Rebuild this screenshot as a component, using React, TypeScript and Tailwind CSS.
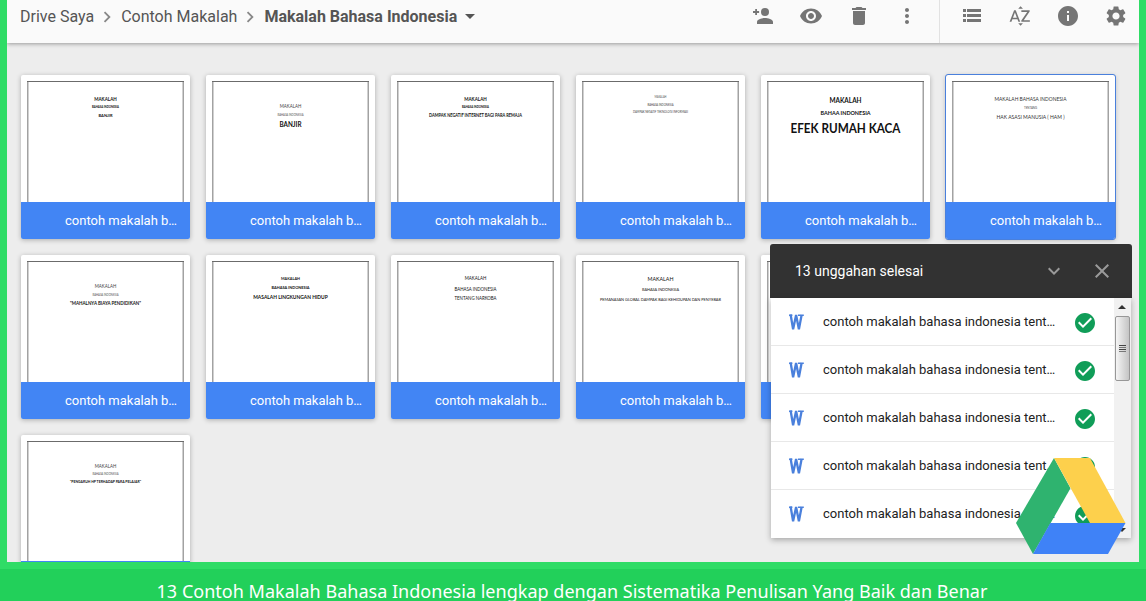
import clsx from "clsx";
import {
  MdCheckCircle,
  MdChevronRight,
  MdClose,
  MdDelete,
  MdExpandMore,
  MdInfo,
  MdMoreVert,
  MdRemoveRedEye,
  MdSettings,
  MdSortByAlpha,
} from "react-icons/md";

type Line = {
  text: string;
  y: number;
  width: number;
  size: number;
  bold?: boolean;
  color?: string;
};

type Doc = {
  lines: Line[];
  selected?: boolean;
  short?: boolean;
};

const docs: Doc[] = [
  {
    lines: [
      { text: "MAKALAH", y: 25.5, width: 22.5, size: 5.2, bold: true },
      { text: "BAHASA INDONESIA", y: 33.2, width: 27, size: 3.2, bold: true },
      { text: "BANJIR", y: 42, width: 14, size: 4.4, bold: true },
    ],
  },
  {
    lines: [
      { text: "MAKALAH", y: 32.8, width: 21.5, size: 5.4, color: "#444" },
      { text: "BAHASA INDONESIA", y: 40.6, width: 26, size: 3.2, color: "#555" },
      { text: "BANJIR", y: 52, width: 22, size: 7.2, bold: true },
    ],
  },
  {
    lines: [
      { text: "MAKALAH", y: 25.5, width: 22.5, size: 5.2, bold: true },
      { text: "BAHASA INDONESIA", y: 33.2, width: 27, size: 3.2, bold: true },
      { text: "DAMPAK NEGATIF INTERNET BAGI PARA REMAJA", y: 42, width: 93, size: 4.6, bold: true },
    ],
  },
  {
    lines: [
      { text: "MAKALAH", y: 23.4, width: 12, size: 3, color: "#555" },
      { text: "BAHASA INDONESIA", y: 30.7, width: 26, size: 3.6, color: "#444" },
      { text: "DAMPAK NEGATIF TEKNOLOGI INFORMASI", y: 37.8, width: 55, size: 3.4, color: "#444" },
    ],
  },
  {
    lines: [
      { text: "MAKALAH", y: 27.6, width: 32, size: 7, bold: true },
      { text: "BAHAA INDONESIA", y: 39.8, width: 50, size: 6, bold: true },
      { text: "EFEK RUMAH KACA", y: 58.4, width: 110, size: 12.8, bold: true },
    ],
  },
  {
    selected: true,
    lines: [
      { text: "MAKALAH BAHASA INDONESIA", y: 26, width: 72, size: 5.6, color: "#333" },
      { text: "TENTANG", y: 34, width: 13, size: 3, color: "#444" },
      { text: "HAK ASASI MANUSIA ( HAM )", y: 44.3, width: 68, size: 5.4, color: "#333" },
    ],
  },
  {
    lines: [
      { text: "MAKALAH", y: 32.8, width: 21.5, size: 5.4, color: "#444" },
      { text: "BAHASA INDONESIA", y: 40.6, width: 26, size: 3.2, color: "#555" },
      { text: "\"MAHALNYA BIAYA PENDIDIKAN\"", y: 50, width: 71, size: 5.4, bold: true },
    ],
  },
  {
    lines: [
      { text: "MAKALAH", y: 25, width: 19, size: 4.4, bold: true },
      { text: "BAHASA INDONESIA", y: 34, width: 38, size: 4.4, bold: true },
      { text: "MASALAH LINGKUNGAN HIDUP", y: 44.2, width: 74.5, size: 5.6, bold: true },
    ],
  },
  {
    lines: [
      { text: "MAKALAH", y: 25.4, width: 21.5, size: 5 },
      { text: "BAHASA INDONESIA", y: 35.5, width: 42, size: 4.8 },
      { text: "TENTANG NARKOBA", y: 45.4, width: 42, size: 4.8 },
    ],
  },
  {
    lines: [
      { text: "MAKALAH", y: 26.4, width: 26, size: 6 },
      { text: "BAHASA INDONESIA", y: 36.4, width: 37, size: 4.2 },
      { text: "PEMANASAN GLOBAL DAMPAK BAGI KEHIDUPAN DAN PENYEBAB", y: 45.6, width: 121, size: 4.6 },
    ],
  },
  { lines: [] },
  { lines: [] },
  {
    short: true,
    lines: [
      { text: "MAKALAH", y: 32.6, width: 21.5, size: 5.4, color: "#444" },
      { text: "BAHASA INDONESIA", y: 40.4, width: 26, size: 3.2, color: "#555" },
      { text: "\"PENGARUH HP TERHADAP PARA PELAJAR\"", y: 48.3, width: 71, size: 4.2, bold: true },
    ],
  },
];

const uploads = [1, 2, 3, 4, 5];

function AddPersonIcon() {
  return (
    <svg width="24" height="24" viewBox="0 0 24 24" fill="currentColor">
      <circle cx="14" cy="8" r="4" />
      <path d="M6 20v-2c0-2.7 5.3-4 8-4s8 1.3 8 4v2z" />
      <path d="M4.2 5h1.8v2.1h2.1v1.8H6V11H4.2V8.9H2V7.1h2.2z" />
    </svg>
  );
}

function ListIcon() {
  return (
    <svg width="24" height="24" viewBox="0 0 24 24" fill="currentColor">
      <path d="M3 5h3v3H3zM3 10h3v3H3zM3 15h3v3H3zM7 5h14v3H7zM7 10h14v3H7zM7 15h14v3H7z" />
    </svg>
  );
}

function WordIcon() {
  return (
    <svg width="16" height="16" viewBox="0 0 16 16" fill="none" stroke="#4a80dc">
      <path d="M2.6 0.5 L5.1 15.2 L8.1 1 L10.9 15.2 L13.6 1" strokeWidth="2.3" strokeLinejoin="bevel" />
      <path d="M1 1.2H4.4M10 1.2H15.8" strokeWidth="1.5" />
    </svg>
  );
}

function DriveLogo() {
  return (
    <svg width="110" height="96" viewBox="0 0 110 96">
      <path d="M38 0 L54.5 30.3 L17 96 L0 65 Z" fill="#2fb36f" />
      <path d="M38 0 H74 L109.5 65 H74 Z" fill="#fdd04c" />
      <path d="M34.3 65 H109.5 L92 96 H17 Z" fill="#3f82f7" />
    </svg>
  );
}

function Preview({ lines, short }: Doc) {
  return (
    <svg
      width="169"
      height={short ? 126 : 127}
      className="block shrink-0 font-[Lato,sans-serif]"
    >
      <path d="M7.5 127V7M161.5 127V7" fill="none" stroke="#d0d0d0" />
      <path d="M6.5 127V7M162.5 127V7" fill="none" stroke="#a2a2a2" />
      <path d="M6 6.5H163" stroke="#6b6b6b" />
      {lines.map((line) => (
        <text
          key={line.text}
          x="84.5"
          y={line.y}
          textAnchor="middle"
          textLength={line.width}
          lengthAdjust="spacingAndGlyphs"
          fontSize={line.size}
          fontWeight={line.bold ? 700 : 400}
          fill={line.color ?? "#111"}
        >
          {line.text}
        </text>
      ))}
    </svg>
  );
}

function Card({ doc }: { doc: Doc }) {
  return (
    <div
      className={clsx(
        "flex h-[164px] w-[169px] flex-col overflow-hidden rounded-[2px] bg-white shadow-[0_1px_5px_rgba(0,0,0,0.28)]",
        doc.selected && "outline outline-[#4a80dc]",
      )}
    >
      <Preview {...doc} />
      <div className="flex flex-1 items-center bg-[#4285f4] pl-11 text-[13px] whitespace-nowrap text-white">
        {!doc.short && "contoh makalah b…"}
      </div>
    </div>
  );
}

function Toolbar() {
  return (
    <div className="relative flex h-[43px] shrink-0 items-start justify-between bg-[#fafafa] text-[#555] shadow-[0_1px_4px_rgba(0,0,0,0.35)]">
      <div className="flex h-[33px] items-center pl-[13px] text-base whitespace-nowrap">
        <span>Drive Saya</span>
        <MdChevronRight className="mr-[3px] ml-0.5 size-[22px] text-[#888]" />
        <span>Contoh Makalah</span>
        <MdChevronRight className="mr-[3px] ml-0.5 size-[22px] text-[#888]" />
        <span className="font-bold">Makalah Bahasa Indonesia</span>
        <span className="ml-2 border-x-[5px] border-t-[5px] border-x-transparent border-t-[#555]" />
      </div>
      <div className="flex h-full text-2xl text-[#757575]">
        <div className="flex h-8 items-center gap-6 pr-5">
          <AddPersonIcon />
          <MdRemoveRedEye />
          <MdDelete />
          <MdMoreVert />
        </div>
        <div className="flex h-full items-start gap-6 border-l border-[#e2e2e2] pt-1 pr-[11px] pl-5">
          <ListIcon />
          <MdSortByAlpha />
          <MdInfo />
          <MdSettings />
        </div>
      </div>
    </div>
  );
}

function Scrollbar() {
  return (
    <div className="flex w-[17px] flex-col items-center bg-[#f1f1f1] pr-px">
      <div className="flex h-[18px] items-center">
        <span className="border-x-4 border-b-4 border-x-transparent border-b-[#333]" />
      </div>
      <div className="flex h-[65px] w-[15px] flex-col items-center justify-center gap-px rounded-[2px] border border-[#979797] bg-linear-to-r from-[#f5f5f5] to-[#c4c4c4]">
        <span className="h-px w-[7px] bg-[#444]" />
        <span className="h-px w-[7px] bg-[#777]" />
        <span className="h-px w-[7px] bg-[#444]" />
        <span className="h-px w-[7px] bg-[#777]" />
      </div>
      <div className="flex flex-1 items-end pb-1.5">
        <span className="border-x-4 border-t-4 border-x-transparent border-t-[#333]" />
      </div>
    </div>
  );
}

function UploadPanel() {
  return (
    <div className="absolute top-[244px] left-[770px] w-[362px]">
      <div className="flex h-[54px] items-center rounded-t-[3px] bg-[#323232] pr-[18px] pl-[25px] text-[#9a9a9a]">
        <span className="flex-1 text-sm text-white">13 unggahan selesai</span>
        <MdExpandMore className="mr-6 size-6" />
        <MdClose className="size-6" />
      </div>
      <div className="mx-px flex h-[240px] bg-white shadow-[0_2px_6px_rgba(0,0,0,0.3)]">
        <div className="flex flex-1 flex-col">
          {uploads.map((id) => (
            <div key={id} className="flex h-12 items-center border-b border-[#e8e8e8] pl-[17px] last:border-0">
              <WordIcon />
              <span className="ml-[19px] w-[250px] text-[13px] whitespace-nowrap text-[#222]">
                contoh makalah bahasa indonesia tent…
              </span>
              <MdCheckCircle className="mt-[3px] size-6 text-[#109d58]" />
            </div>
          ))}
        </div>
        <Scrollbar />
      </div>
    </div>
  );
}

export default function App() {
  return (
    <div className="relative flex h-[601px] w-[1146px] flex-col overflow-hidden bg-[#2fdc66] font-[Roboto,sans-serif]">
      <div className="mx-[7px] flex h-[562px] shrink-0 flex-col overflow-hidden bg-[#ededed]">
        <Toolbar />
        <div className="grid grid-cols-[repeat(6,169px)] gap-4 pt-8 pl-3.5">
          {docs.map((doc, i) => (
            <Card key={i} doc={doc} />
          ))}
        </div>
      </div>
      <div className="mt-[7px] flex h-8 justify-center bg-[#22d05a] pt-3 pr-0.5 font-['Noto_Sans',sans-serif] text-[18px] leading-5 tracking-[0.02px] whitespace-nowrap text-white">
        13 Contoh Makalah Bahasa Indonesia lengkap dengan Sistematika Penulisan Yang Baik dan Benar
      </div>
      <UploadPanel />
      <div className="absolute top-[458px] left-[1016px]">
        <DriveLogo />
      </div>
    </div>
  );
}
